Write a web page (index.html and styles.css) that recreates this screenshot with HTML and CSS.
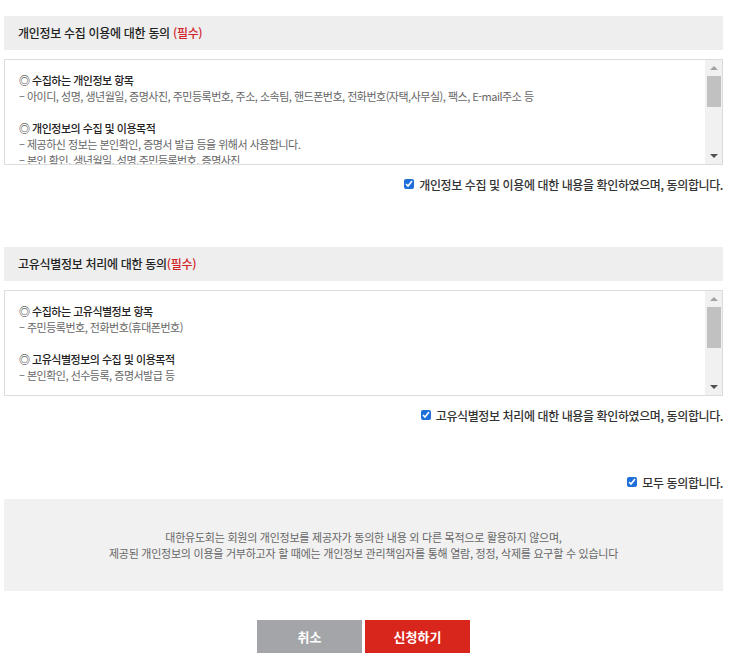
FILE: index.html
```html
<!DOCTYPE html>
<html lang="ko">
<head>
  <meta charset="UTF-8" />
  <title>개인정보 동의</title>
  <link rel="stylesheet" href="styles.css">
</head>
<body>

<div class="wrap">

  <div class="agree-section">
    <h3 class="agree-title">개인정보 수집 이용에 대한 동의 <span class="req">(필수)</span></h3>
    <div class="terms-box">
      <div class="terms-text">
        <p class="terms-head">◎ 수집하는 개인정보 항목</p>
        <p>– 아이디, 성명, 생년월일, 증명사진, 주민등록번호, 주소, 소속팀, 핸드폰번호, 전화번호(자택,사무실), 팩스, E-mail주소 등</p>
        <p>&nbsp;</p>
        <p class="terms-head">◎ 개인정보의 수집 및 이용목적</p>
        <p>– 제공하신 정보는 본인확인, 증명서 발급 등을 위해서 사용합니다.</p>
        <p>– 본인 확인, 생년월일, 성명,주민등록번호, 증명사진</p>
      </div>
      <div class="scrollbar">
        <span class="sb-btn"><i class="arrow-up"></i></span>
        <span class="sb-track"><span class="sb-thumb" style="height: 31px"></span></span>
        <span class="sb-btn"><i class="arrow-down"></i></span>
      </div>
    </div>
    <label class="agree-check"><input type="checkbox" checked> 개인정보 수집 및 이용에 대한 내용을 확인하였으며, 동의합니다.</label>
  </div>

  <div class="agree-section">
    <h3 class="agree-title">고유식별정보 처리에 대한 동의<span class="req">(필수)</span></h3>
    <div class="terms-box">
      <div class="terms-text">
        <p class="terms-head">◎ 수집하는 고유식별정보 항목</p>
        <p>– 주민등록번호, 전화번호(휴대폰번호)</p>
        <p>&nbsp;</p>
        <p class="terms-head">◎ 고유식별정보의 수집 및 이용목적</p>
        <p>– 본인확인, 선수등록, 증명서발급 등</p>
        <p>&nbsp;</p>
      </div>
      <div class="scrollbar">
        <span class="sb-btn"><i class="arrow-up"></i></span>
        <span class="sb-track"><span class="sb-thumb" style="height: 41px"></span></span>
        <span class="sb-btn"><i class="arrow-down"></i></span>
      </div>
    </div>
    <label class="agree-check"><input type="checkbox" checked> 고유식별정보 처리에 대한 내용을 확인하였으며, 동의합니다.</label>
  </div>

  <label class="agree-check all-check"><input type="checkbox" checked> 모두 동의합니다.</label>

  <div class="notice">
    <p>대한유도회는 회원의 개인정보를 제공자가 동의한 내용 외 다른 목적으로 활용하지 않으며,</p>
    <p>제공된 개인정보의 이용을 거부하고자 할 때에는 개인정보 관리책임자를 통해 열람, 정정, 삭제를 요구할 수 있습니다</p>
  </div>

  <div class="btns">
    <button type="button" class="btn btn-cancel">취소</button>
    <button type="button" class="btn btn-submit">신청하기</button>
  </div>

</div>

</body>
</html>
```

FILE: styles.css
```css
body {
  margin: 0;
  font-family: "Noto Sans CJK KR", "Noto Sans", sans-serif;
  font-size: 12px;
  color: #333;
  background: #fff;
}
p {
  margin: 0;
}
.wrap {
  width: 719px;
  margin: 0 0 0 4px;
  padding-top: 16px;
}
.agree-section + .agree-section {
  margin-top: 54px;
}
.agree-title {
  margin: 0;
  height: 34px;
  line-height: 34px;
  padding-left: 14px;
  background: #eeeeee;
  font-size: 12px;
  font-weight: 500;
  color: #222;
  letter-spacing: -0.3px;
}
.agree-title .req {
  color: #d2232a;
}
.terms-box {
  display: flex;
  margin-top: 9px;
  height: 106px;
  box-sizing: border-box;
  border: 1px solid #dcdcdc;
}
.terms-text {
  flex: 1;
  overflow: hidden;
  padding: 12px 14px;
  font-size: 11px;
  line-height: 16px;
  color: #666;
  letter-spacing: -0.5px;
  white-space: nowrap;
}
.terms-text .terms-head {
  color: #222;
  font-weight: 500;
}

/* fake classic scrollbar */
.scrollbar {
  display: flex;
  flex-direction: column;
  width: 17px;
  background: #f1f1f1;
}
.sb-btn {
  display: flex;
  align-items: center;
  justify-content: center;
  height: 16px;
}
.sb-track {
  flex: 1;
  display: flex;
  flex-direction: column;
}
.sb-thumb {
  margin: 0 1px 0 2px;
  background: #c1c1c1;
}
.arrow-up,
.arrow-down {
  width: 0;
  height: 0;
  border-left: 4px solid transparent;
  border-right: 4px solid transparent;
}
.arrow-up {
  border-bottom: 4px solid #a3a3a3;
}
.arrow-down {
  border-top: 4px solid #505050;
}

.agree-check {
  display: flex;
  justify-content: flex-end;
  align-items: center;
  gap: 3px;
  margin-top: 10px;
  height: 18px;
  font-size: 12px;
  font-weight: 500;
  color: #333;
  letter-spacing: -0.4px;
}
.agree-check input {
  width: 10px;
  height: 10px;
  margin: 0 2px 0 0;
  accent-color: #1e6fd9;
}
.all-check {
  margin-top: 49px;
}
.notice {
  margin-top: 8px;
  height: 92px;
  background: #f1f1f1;
  display: flex;
  flex-direction: column;
  justify-content: center;
  align-items: center;
  font-size: 11px;
  line-height: 16px;
  color: #666;
  letter-spacing: -0.25px;
}
.btns {
  display: flex;
  justify-content: center;
  gap: 3px;
  margin-top: 29px;
}
.btn {
  width: 105px;
  height: 33px;
  border: none;
  color: #fff;
  font-family: inherit;
  font-size: 13px;
  font-weight: 700;
  cursor: pointer;
}
.btn-cancel {
  background: #a3a5a9;
}
.btn-submit {
  background: #d9261c;
}
```
